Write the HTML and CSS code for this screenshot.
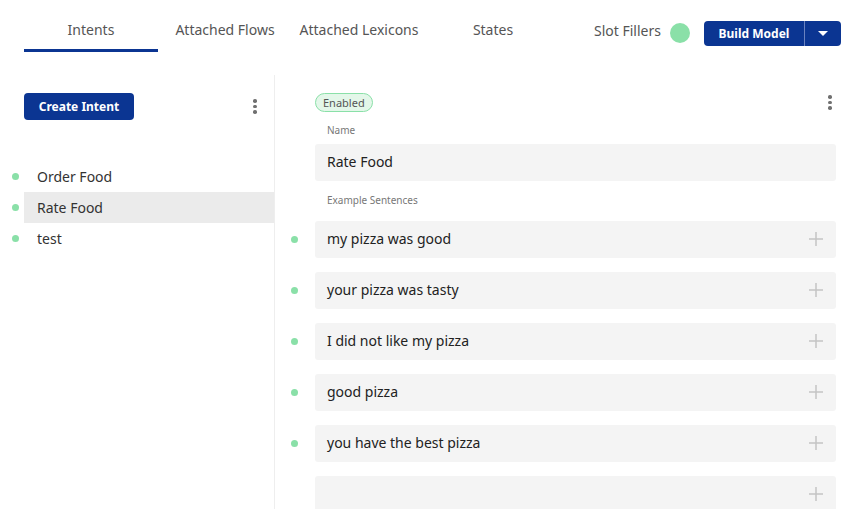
FILE: index.html
```html
<!DOCTYPE html>
<html>
<head>
<meta charset="utf-8">
<link rel="stylesheet" href="styles.css">
</head>
<body>
<header class="topbar">
  <nav class="tabs">
    <div class="tab active">Intents</div>
    <div class="tab">Attached Flows</div>
    <div class="tab">Attached Lexicons</div>
    <div class="tab">States</div>
  </nav>
  <div class="actions">
    <span class="slot-label">Slot Fillers</span>
    <span class="status-dot"></span>
    <div class="split-btn">
      <button class="split-main">Build Model</button>
      <button class="split-caret"><svg width="10" height="6" viewBox="0 0 10 6"><path d="M0 0h10L5 5z" fill="#fff"/></svg></button>
    </div>
  </div>
</header>
<main class="content">
  <aside class="sidebar">
    <div class="sidebar-head">
      <button class="primary-btn">Create Intent</button>
      <span class="kebab"><i></i><i></i><i></i></span>
    </div>
    <ul class="intent-list">
      <li class="intent"><span class="dot"></span><span class="intent-name">Order Food</span></li>
      <li class="intent selected"><span class="dot"></span><span class="intent-name">Rate Food</span></li>
      <li class="intent"><span class="dot"></span><span class="intent-name">test</span></li>
    </ul>
  </aside>
  <section class="detail">
    <div class="row head-row">
      <span></span>
      <div class="head-line">
        <span class="badge">Enabled</span>
        <span class="kebab"><i></i><i></i><i></i></span>
      </div>
    </div>
    <div class="row"><span></span><label class="field-label">Name</label></div>
    <div class="row"><span></span><div class="field">Rate Food</div></div>
    <div class="row"><span></span><label class="field-label ex-label">Example Sentences</label></div>
    <div class="sentences">
      <div class="row"><span class="dot"></span><div class="field sentence"><span>my pizza was good</span><svg class="plus" width="14" height="14" viewBox="0 0 14 14"><path d="M7 0v14M0 7h14"/></svg></div></div>
      <div class="row"><span class="dot"></span><div class="field sentence"><span>your pizza was tasty</span><svg class="plus" width="14" height="14" viewBox="0 0 14 14"><path d="M7 0v14M0 7h14"/></svg></div></div>
      <div class="row"><span class="dot"></span><div class="field sentence"><span>I did not like my pizza</span><svg class="plus" width="14" height="14" viewBox="0 0 14 14"><path d="M7 0v14M0 7h14"/></svg></div></div>
      <div class="row"><span class="dot"></span><div class="field sentence"><span>good pizza</span><svg class="plus" width="14" height="14" viewBox="0 0 14 14"><path d="M7 0v14M0 7h14"/></svg></div></div>
      <div class="row"><span class="dot"></span><div class="field sentence"><span>you have the best pizza</span><svg class="plus" width="14" height="14" viewBox="0 0 14 14"><path d="M7 0v14M0 7h14"/></svg></div></div>
      <div class="row"><span></span><div class="field sentence"><span></span><svg class="plus" width="14" height="14" viewBox="0 0 14 14"><path d="M7 0v14M0 7h14"/></svg></div></div>
    </div>
  </section>
</main>
</body>
</html>
```

FILE: styles.css
```css
* { box-sizing: border-box; }
html, body { margin: 0; padding: 0; }
body {
  width: 846px;
  height: 509px;
  overflow: hidden;
  background: #fff;
  font-family: "Noto Sans", "Open Sans", sans-serif;
  color: #2b2b3a;
}
.topbar {
  display: flex;
  align-items: flex-start;
  height: 75px;
  padding-left: 24px;
}
.tabs { display: flex; flex-shrink: 0; }
.tab {
  width: 134px;
  text-align: center;
  font-size: 14px;
  line-height: 18px;
  padding-top: 21px;
  height: 52px;
  color: #555;
  white-space: nowrap;
  border-bottom: 3px solid transparent;
}
.tab.active { border-bottom-color: #0b3592; }
.actions {
  display: flex;
  align-items: center;
  margin-left: 34px;
  padding-top: 21px;
  flex-shrink: 0;
}
.slot-label { font-size: 14px; color: #555; margin-top: -7px; white-space: nowrap; width: 63px; }
.status-dot {
  width: 20px; height: 20px; border-radius: 50%;
  background: #8ae0a8;
  margin-left: 13px;
  margin-top: -2px;
  flex-shrink: 0;
}
.split-btn {
  display: flex;
  margin-left: 14px;
  height: 25px;
  background: #0b3592;
  border-radius: 4px;
  flex-shrink: 0;
}
.split-main, .split-caret {
  border: 0; background: transparent; color: #fff;
  font-family: inherit; font-weight: 700; font-size: 12px;
  padding: 0; cursor: pointer; white-space: nowrap;
}
.split-main { width: 101px; border-right: 1px solid #6a82c0; }
.split-caret { width: 36px; display: flex; align-items: center; justify-content: center; }
.content { display: flex; height: 434px; }
.sidebar {
  width: 275px;
  border-right: 1px solid #eee;
  padding-top: 18px;
}
.sidebar-head {
  display: flex;
  align-items: center;
  justify-content: space-between;
  padding-left: 24px;
  padding-right: 16px;
}
.primary-btn {
  width: 110px; height: 27px;
  background: #0b3592; color: #fff;
  border: 0; border-radius: 4px;
  font-family: inherit; font-weight: 700; font-size: 12px;
}
.kebab { display: flex; flex-direction: column; gap: 2px; width: 6px; align-items: center; }
.kebab i { width: 3.5px; height: 3.5px; border-radius: 50%; background: #707070; display: block; }
.intent-list { list-style: none; margin: 41px 0 0; padding: 0; }
.intent { display: flex; align-items: center; height: 31px; }
.intent .dot { margin-left: 12px; margin-right: 5px; }
.dot { width: 7px; height: 7px; border-radius: 50%; background: #8ae0a8; display: block; }
.intent-name {
  flex: 1; height: 100%; display: flex; align-items: center;
  padding-left: 13px; font-size: 14px; color: #333; padding-bottom: 1px;
}
.intent.selected .intent-name { background: #ebebeb; }
.detail { flex: 1; padding-top: 18px; padding-right: 10px; }
.row { display: grid; grid-template-columns: 40px 1fr; align-items: center; }
.row > .dot { justify-self: center; margin-left: -1px; }
.head-line { display: flex; justify-content: space-between; align-items: center; padding-right: 3px; }
.head-row { height: 19px; }
.badge {
  font-size: 11px; line-height: 17px; height: 19px;
  padding: 0 7px; color: #555;
  background: #e3f7e9; border: 1px solid #8ae0a8; border-radius: 10px;
}
.field-label { font-size: 10px; color: #777; padding-left: 12px; line-height: 14px; margin: 11px 0 7px; }
.ex-label { margin: 12px 0 14px; }
.field {
  height: 37px; background: #f4f4f4; border-radius: 3px;
  display: flex; align-items: center; padding-left: 12px;
  font-size: 14px; color: #222; padding-bottom: 2px;
}
.sentences { display: flex; flex-direction: column; gap: 14px; }
.sentence { justify-content: space-between; padding-right: 13px; }
.plus { stroke: #c4c4c4; stroke-width: 1.5; fill: none; }
```
